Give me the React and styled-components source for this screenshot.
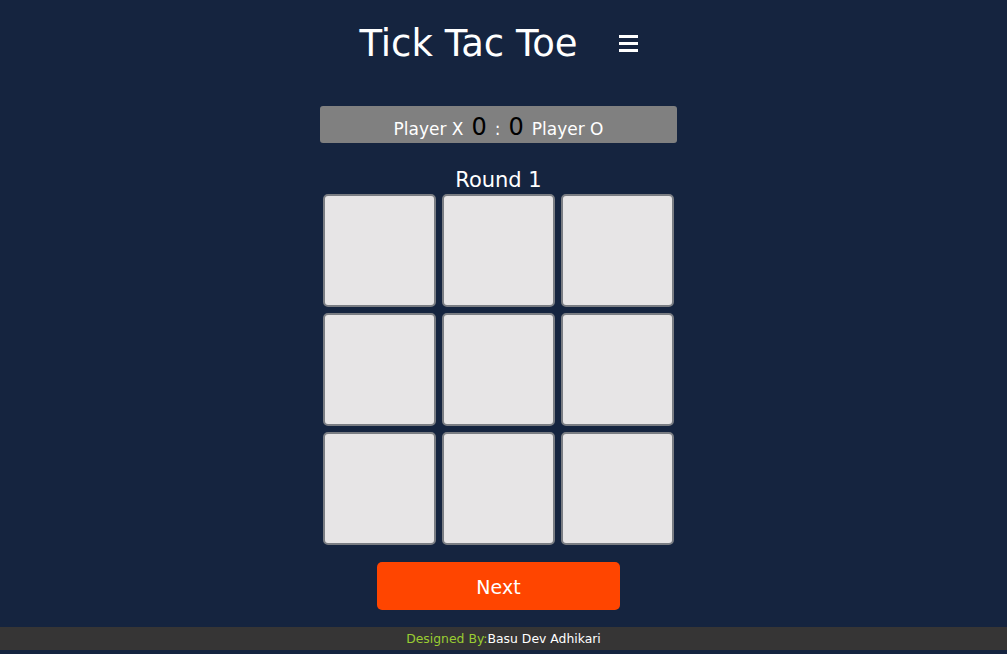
import React from "react";
import styled, { createGlobalStyle } from "styled-components";

const Global = createGlobalStyle`
  html, body { margin: 0; padding: 0; background: #15243f; }
  body { font-family: "DejaVu Sans", Verdana, sans-serif; color: #fff; }
  #root { min-height: 654px; display: flex; flex-direction: column; }
`;

const Page = styled.div`
  display: flex;
  flex-direction: column;
  min-height: 654px;
`;

const Main = styled.main`
  flex: 1;
  display: flex;
  flex-direction: column;
  align-items: center;
  padding-right: 10px;
`;

const Header = styled.header`
  display: flex;
  align-items: center;
  gap: 41px;
  height: 86px;
`;

const Title = styled.h1`
  margin: 0;
  font-size: 37px;
  font-weight: normal;
  color: #fff;
`;

const Burger = styled.button`
  background: none;
  border: 0;
  padding: 0;
  display: flex;
  flex-direction: column;
  gap: 4px;
  cursor: pointer;
  span {
    display: block;
    width: 19px;
    height: 3px;
    background: #fff;
  }
`;

const Score = styled.div`
  margin-top: 20px;
  width: 357px;
  height: 37px;
  box-sizing: border-box;
  padding-top: 8px;
  background: #808080;
  border-radius: 3px;
  display: flex;
  align-items: center;
  justify-content: center;
  gap: 8px;
  font-size: 17px;
  color: #fff;
`;

const Num = styled.span`
  font-size: 24px;
  line-height: 20px;
  margin-top: -4px;
  color: #000;
`;

const Round = styled.div`
  margin-top: 24px;
  font-size: 21px;
  line-height: 26px;
`;

const Board = styled.div`
  margin-top: 1px;
  display: grid;
  grid-template-columns: repeat(3, 113px);
  grid-auto-rows: 113px;
  gap: 6px;
`;

const Cell = styled.button`
  box-sizing: border-box;
  background: #e7e5e6;
  border: 2px solid #7a7d83;
  border-radius: 5px;
  padding: 0;
  cursor: pointer;
`;

const Next = styled.button`
  margin-top: 17px;
  width: 243px;
  height: 48px;
  padding-top: 2px;
  background: #ff4500;
  color: #fff;
  border: 0;
  border-radius: 5px;
  font-family: inherit;
  font-size: 19px;
  cursor: pointer;
`;

const Footer = styled.footer`
  margin-top: 17px;
  margin-bottom: 4px;
  height: 23px;
  background: #363535;
  display: flex;
  align-items: center;
  justify-content: center;
  font-size: 12.4px;
  color: #fff;
`;

const Credit = styled.span`
  color: #9acd32;
`;

export default function App() {
  return (
    <Page>
      <Global />
      <Main>
        <Header>
          <Title>Tick Tac Toe</Title>
          <Burger aria-label="menu">
            <span />
            <span />
            <span />
          </Burger>
        </Header>
        <Score>
          <span>Player X</span>
          <Num>0</Num>
          <span>:</span>
          <Num>0</Num>
          <span>Player O</span>
        </Score>
        <Round>Round 1</Round>
        <Board>
          {Array.from({ length: 9 }).map((_, i) => (
            <Cell key={i} />
          ))}
        </Board>
        <Next>Next</Next>
      </Main>
      <Footer>
        <Credit>Designed By:</Credit>Basu Dev Adhikari
      </Footer>
    </Page>
  );
}
